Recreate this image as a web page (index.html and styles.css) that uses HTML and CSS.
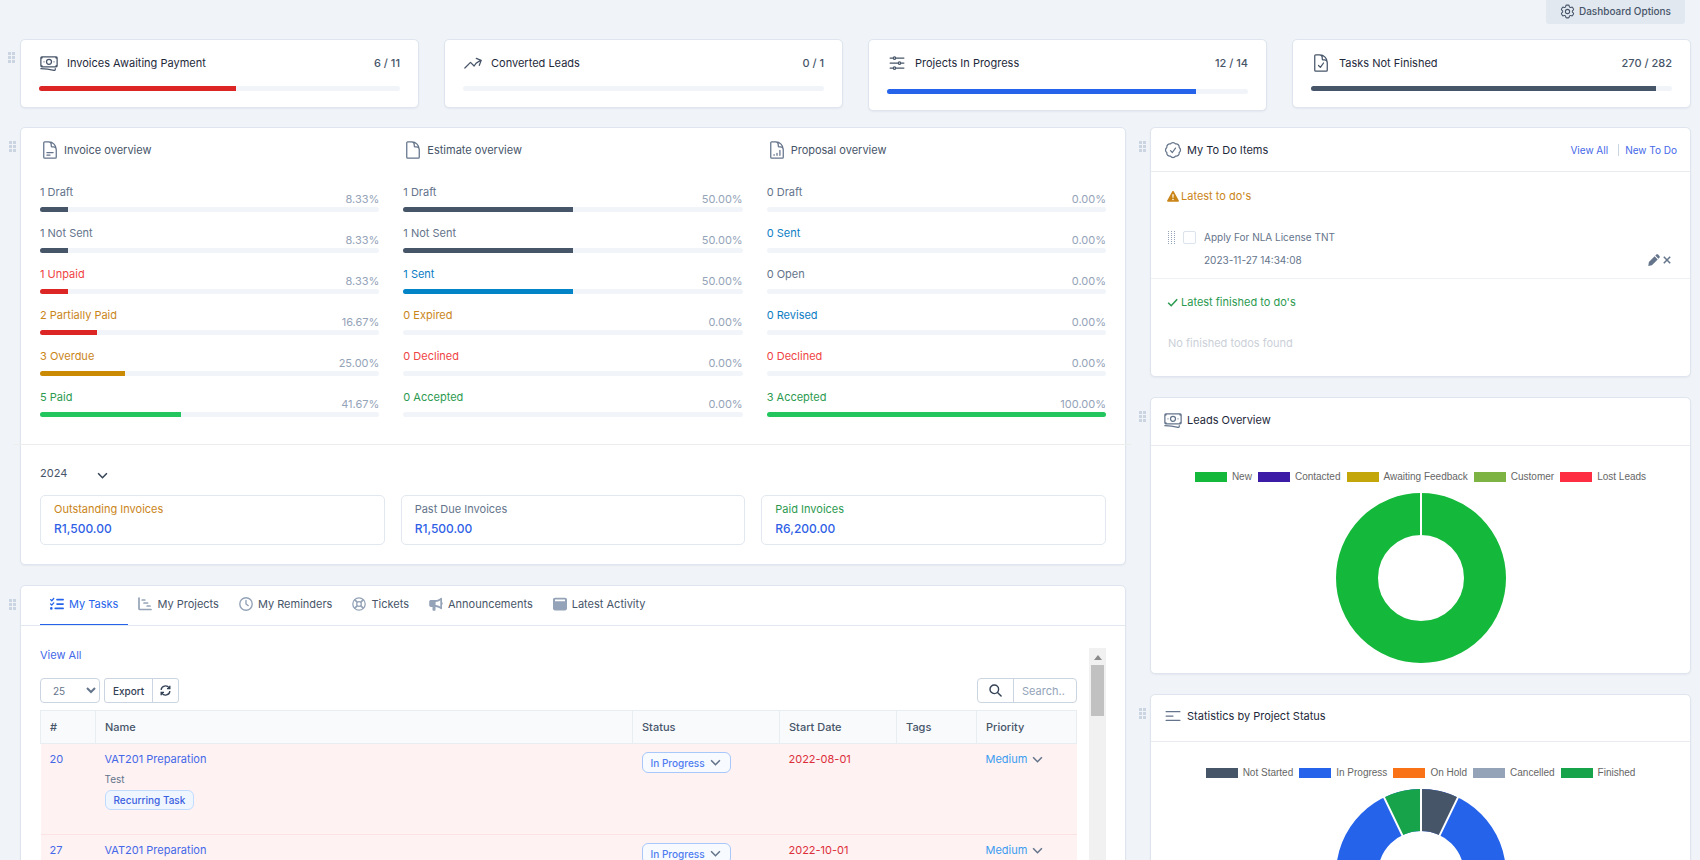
FILE: index.html
```html
<!DOCTYPE html>
<html lang="en">
<head>
<meta charset="utf-8">
<title>Dashboard</title>
<link rel="stylesheet" href="styles.css">
</head>
<body>
<svg class="sprite" aria-hidden="true">
  <symbol id="cog" viewBox="0 0 24 24"><path d="M9.594 3.94c.09-.542.56-.94 1.11-.94h2.593c.55 0 1.02.398 1.11.94l.213 1.281c.063.374.313.686.645.87.074.04.147.083.22.127.324.196.72.257 1.075.124l1.217-.456a1.125 1.125 0 011.37.49l1.296 2.247a1.125 1.125 0 01-.26 1.431l-1.003.827c-.293.24-.438.613-.431.992a6.759 6.759 0 010 .255c-.007.378.138.75.43.99l1.005.828c.424.35.534.954.26 1.43l-1.298 2.247a1.125 1.125 0 01-1.369.491l-1.217-.456c-.355-.133-.75-.072-1.076.124a6.57 6.57 0 01-.22.128c-.331.183-.581.495-.644.869l-.213 1.28c-.09.543-.56.941-1.11.941h-2.594c-.55 0-1.02-.398-1.11-.94l-.213-1.281c-.062-.374-.312-.686-.644-.87a6.52 6.52 0 01-.22-.127c-.325-.196-.72-.257-1.076-.124l-1.217.456a1.125 1.125 0 01-1.369-.49l-1.297-2.247a1.125 1.125 0 01.26-1.431l1.004-.827c.292-.24.437-.613.43-.992a6.932 6.932 0 010-.255c.007-.378-.138-.75-.43-.99l-1.004-.828a1.125 1.125 0 01-.26-1.43l1.297-2.247a1.125 1.125 0 011.37-.491l1.216.456c.356.133.751.072 1.076-.124.072-.044.146-.087.22-.128.332-.183.582-.495.644-.869l.214-1.281z"/><path d="M15 12a3 3 0 11-6 0 3 3 0 016 0z"/></symbol>
  <symbol id="cash" viewBox="0 0 24 24"><path d="M2.25 18.75a60.07 60.07 0 0115.797 2.101c.727.198 1.453-.342 1.453-1.096V18.75M3.75 4.5v.75A.75.75 0 013 6h-.75m0 0v-.375c0-.621.504-1.125 1.125-1.125H20.25M2.25 6v9m18-10.5v.75c0 .414.336.75.75.75h.75m-1.5-1.5h.375c.621 0 1.125.504 1.125 1.125v9.75c0 .621-.504 1.125-1.125 1.125h-.375m1.5-1.5H21a.75.75 0 00-.75.75v.75m0 0H3.75m0 0h-.375a1.125 1.125 0 01-1.125-1.125V15m1.5 1.5v-.75A.75.75 0 003 15h-.75M15 10.5a3 3 0 11-6 0 3 3 0 016 0zm3 0h.008v.008H18V10.5zm-12 0h.008v.008H6V10.5z"/></symbol>
  <symbol id="trend" viewBox="0 0 24 24"><path d="M2.25 18L9 11.25l4.306 4.307a11.95 11.95 0 015.814-5.519l2.74-1.22m0 0l-5.94-2.28m5.94 2.28l-2.28 5.941"/></symbol>
  <symbol id="sliders" viewBox="0 0 24 24"><path d="M10.5 6h9.75M10.5 6a1.5 1.5 0 11-3 0m3 0a1.5 1.5 0 10-3 0M3.75 6H7.5m3 12h9.75m-9.75 0a1.5 1.5 0 01-3 0m3 0a1.5 1.5 0 00-3 0m-3.75 0H7.5m9-6h3.75m-3.75 0a1.5 1.5 0 01-3 0m3 0a1.5 1.5 0 00-3 0m-9.75 0h9.75"/></symbol>
  <symbol id="doc" viewBox="0 0 24 24"><path d="M19.5 14.25v-2.625a3.375 3.375 0 00-3.375-3.375h-1.5A1.125 1.125 0 0113.5 7.125v-1.5a3.375 3.375 0 00-3.375-3.375H8.25m2.25 0H5.625c-.621 0-1.125.504-1.125 1.125v17.25c0 .621.504 1.125 1.125 1.125h12.75c.621 0 1.125-.504 1.125-1.125V11.25a9 9 0 00-9-9z"/></symbol>
  <symbol id="badge" viewBox="0 0 24 24"><path d="M9 12.75L11.25 15 15 9.75M21 12c0 1.268-.63 2.39-1.593 3.068a3.745 3.745 0 01-1.043 3.296 3.745 3.745 0 01-3.296 1.043A3.745 3.745 0 0112 21c-1.268 0-2.39-.63-3.068-1.593a3.746 3.746 0 01-3.296-1.043 3.745 3.745 0 01-1.043-3.296A3.745 3.745 0 013 12c0-1.268.63-2.39 1.593-3.068a3.745 3.745 0 011.043-3.296 3.746 3.746 0 013.296-1.043A3.746 3.746 0 0112 3c1.268 0 2.39.63 3.068 1.593a3.746 3.746 0 013.296 1.043 3.746 3.746 0 011.043 3.296A3.745 3.745 0 0121 12z"/></symbol>
  <symbol id="bars" viewBox="0 0 24 24"><path d="M3.75 6.75h16.5M3.75 12H12m-8.25 5.25h16.5"/></symbol>
  <symbol id="chev" viewBox="0 0 10 6"><path d="M1 1l4 4 4-4" fill="none" stroke="currentColor" stroke-width="1.4"/></symbol>
  <symbol id="grip" viewBox="0 0 7 11"><path fill="currentColor" d="M0 0h3v3H0zM4 0h3v3H4zM0 4h3v3H0zM4 4h3v3H4zM0 8h3v3H0zM4 8h3v3H4z"/></symbol>
</svg>
<div class="page">
  <header class="topbar"><button type="button" class="options"><svg class="ico ico-s"><use href="#cog"/></svg>Dashboard Options</button></header>

  <section class="widget">
    <svg class="grip"><use href="#grip"/></svg>
    <div class="cards">
      <article class="card"><div class="card-head"><svg class="ico"><use href="#cash"/></svg><h2>Invoices Awaiting Payment</h2><b>6 / 11</b></div><div class="bar"><i class="red" style="width:54.5%"></i></div></article>
      <article class="card"><div class="card-head"><svg class="ico"><use href="#trend"/></svg><h2>Converted Leads</h2><b>0 / 1</b></div><div class="bar"></div></article>
      <article class="card"><div class="card-head tall"><svg class="ico"><use href="#sliders"/></svg><h2>Projects In Progress</h2><b>12 / 14</b></div><div class="bar"><i class="blue" style="width:85.7%"></i></div></article>
      <article class="card"><div class="card-head"><svg class="ico" viewBox="0 0 24 24"><use href="#doc"/><path d="M9 15l2.25 2.25L15 12"/></svg><h2>Tasks Not Finished</h2><b>270 / 282</b></div><div class="bar"><i class="slate" style="width:95.7%"></i></div></article>
    </div>
  </section>

  <div class="columns">
    <main class="col">
      <section class="widget">
        <svg class="grip"><use href="#grip"/></svg>
        <div class="panel finance">
          <div class="overviews">
            <div>
              <h3><svg class="ico" viewBox="0 0 24 24"><use href="#doc"/><path d="M8.25 15h7.5m-7.5 3H12"/></svg>Invoice overview</h3>
              <div class="stat"><a href="#" class="t-slate">1 Draft</a><span>8.33%</span></div><div class="bar"><i class="slate" style="width:8.33%"></i></div>
              <div class="stat"><a href="#" class="t-slate">1 Not Sent</a><span>8.33%</span></div><div class="bar"><i class="slate" style="width:8.33%"></i></div>
              <div class="stat"><a href="#" class="t-red">1 Unpaid</a><span>8.33%</span></div><div class="bar"><i class="red" style="width:8.33%"></i></div>
              <div class="stat"><a href="#" class="t-amber">2 Partially Paid</a><span>16.67%</span></div><div class="bar"><i class="red" style="width:16.67%"></i></div>
              <div class="stat"><a href="#" class="t-amber">3 Overdue</a><span>25.00%</span></div><div class="bar"><i class="amber" style="width:25%"></i></div>
              <div class="stat"><a href="#" class="t-green">5 Paid</a><span>41.67%</span></div><div class="bar"><i class="green" style="width:41.67%"></i></div>
            </div>
            <div>
              <h3><svg class="ico"><use href="#doc"/></svg>Estimate overview</h3>
              <div class="stat"><a href="#" class="t-slate">1 Draft</a><span>50.00%</span></div><div class="bar"><i class="slate" style="width:50%"></i></div>
              <div class="stat"><a href="#" class="t-slate">1 Not Sent</a><span>50.00%</span></div><div class="bar"><i class="slate" style="width:50%"></i></div>
              <div class="stat"><a href="#" class="t-sky">1 Sent</a><span>50.00%</span></div><div class="bar"><i class="sky" style="width:50%"></i></div>
              <div class="stat"><a href="#" class="t-amber">0 Expired</a><span>0.00%</span></div><div class="bar"></div>
              <div class="stat"><a href="#" class="t-red">0 Declined</a><span>0.00%</span></div><div class="bar"></div>
              <div class="stat"><a href="#" class="t-green">0 Accepted</a><span>0.00%</span></div><div class="bar"></div>
            </div>
            <div>
              <h3><svg class="ico" viewBox="0 0 24 24"><use href="#doc"/><path d="M8.5 17.5v.8M12 16v2.300M15.500 12.500v5.800"/></svg>Proposal overview</h3>
              <div class="stat"><a href="#" class="t-slate">0 Draft</a><span>0.00%</span></div><div class="bar"></div>
              <div class="stat"><a href="#" class="t-sky">0 Sent</a><span>0.00%</span></div><div class="bar"></div>
              <div class="stat"><a href="#" class="t-slate">0 Open</a><span>0.00%</span></div><div class="bar"></div>
              <div class="stat"><a href="#" class="t-sky">0 Revised</a><span>0.00%</span></div><div class="bar"></div>
              <div class="stat"><a href="#" class="t-red">0 Declined</a><span>0.00%</span></div><div class="bar"></div>
              <div class="stat"><a href="#" class="t-green">3 Accepted</a><span>100.00%</span></div><div class="bar"><i class="green" style="width:100%"></i></div>
            </div>
          </div>
          <hr>
          <div class="year"><select aria-label="Year"><option>2024</option></select><svg class="chev"><use href="#chev"/></svg></div>
          <div class="totals">
            <div><span class="t-amber">Outstanding Invoices</span><strong>R1,500.00</strong></div>
            <div><span class="t-slate">Past Due Invoices</span><strong>R1,500.00</strong></div>
            <div><span class="t-green">Paid Invoices</span><strong>R6,200.00</strong></div>
          </div>
        </div>
      </section>

      <section class="widget">
        <svg class="grip"><use href="#grip"/></svg>
        <div class="panel">
          <nav class="tabs">
            <a href="#" class="active"><svg viewBox="0 0 512 512"><path d="M152.100 38.200c9.900 8.900 10.700 24 1.800 33.900l-72 80c-4.400 4.900-10.600 7.800-17.200 7.900s-12.900-2.400-17.600-7L7 113C-2.300 103.600-2.300 88.400 7 79s24.600-9.400 33.900 0l22.100 22.100 55.100-61.200c8.900-9.900 24-10.700 33.900-1.800zm0 160c9.900 8.900 10.700 24 1.800 33.900l-72 80c-4.400 4.900-10.600 7.800-17.200 7.900s-12.900-2.400-17.600-7L7 273c-9.400-9.400-9.400-24.600 0-33.900s24.600-9.400 33.900 0l22.100 22.100 55.100-61.200c8.900-9.900 24-10.700 33.900-1.800zM224 96c0-17.700 14.300-32 32-32H480c17.700 0 32 14.300 32 32s-14.300 32-32 32H256c-17.700 0-32-14.300-32-32zm0 160c0-17.700 14.300-32 32-32H480c17.700 0 32 14.300 32 32s-14.300 32-32 32H256c-17.700 0-32-14.300-32-32zM160 416c0-17.700 14.300-32 32-32H480c17.700 0 32 14.300 32 32s-14.300 32-32 32H192c-17.700 0-32-14.300-32-32zM48 368a48 48 0 1 1 0 96 48 48 0 1 1 0-96z"/></svg>My Tasks</a>
            <a href="#"><svg viewBox="0 0 14 14"><path fill="none" stroke="currentColor" stroke-width="1.700" stroke-linecap="round" stroke-linejoin="round" d="M1 1v10.500q0 1 1 1h11M4.200 3h2.600M6 6h3.600M9.200 9h2.800"/></svg>My Projects</a>
            <a href="#"><svg viewBox="0 0 14 14"><g fill="none" stroke="currentColor" stroke-width="1.400" stroke-linecap="round"><circle cx="7" cy="7" r="6.200"/><path d="M7 3.500V7l2.200 1.600"/></g></svg>My Reminders</a>
            <a href="#"><svg viewBox="0 0 14 14"><g fill="none" stroke="currentColor" stroke-width="1.300"><circle cx="7" cy="7" r="6.200"/><circle cx="7" cy="7" r="2.300"/><path d="M2.600 2.600l2.800 2.800M11.400 2.600L8.600 5.400M2.600 11.400l2.800-2.800M11.400 11.400L8.600 8.600" stroke-width="1.700"/></g></svg>Tickets</a>
            <a href="#"><svg viewBox="0 0 14 14"><path fill-rule="evenodd" d="M12 .8c.6-.3 1 0 1 .6v3.900c1 .4 1 2 0 2.400v3.900c0 .6-.5.900-1 .6C10.300 10.700 8.700 10 6.500 9.900V13c0 .5-.3.800-.8.800H4.300c-.5 0-.8-.3-.8-.8V9.900H2C1 9.900.2 9.200.2 8.200V4.800C.2 3.800 1 3.100 2 3.100h4C8.500 3.100 10.300 2.300 12 .8zM11.300 3.200C10 4.200 8.400 4.800 6.600 4.900v3.200c1.800.1 3.400.7 4.700 1.700z"/></svg>Announcements</a>
            <a href="#"><svg viewBox="0 0 14 14"><path fill-rule="evenodd" d="M2 .8h10c1.100 0 2 .7 2 1.800v9c0 1.100-.9 1.800-2 1.800H2c-1.100 0-2-.7-2-1.800v-9C0 1.500.9.800 2 .8zM2 2.500v1.800h10V2.500z"/></svg>Latest Activity</a>
          </nav>
          <div class="scroll">
            <div class="scroll-body">
              <a href="#" class="viewall">View All</a>
              <div class="tools">
                <select class="length" aria-label="Rows per page"><option>25</option></select>
                <div class="group"><button type="button">Export</button><button type="button" aria-label="Reload"><svg width="11" height="11" viewBox="0 0 12 12" fill="none" stroke="#334155" stroke-width="1.500"><path d="M1.200 5.300A4.800 4.800 0 0110 3.200M10.800 6.700A4.800 4.800 0 012 8.800M10.700.8v3.100H7.600M1.300 11.200V8.100h3.100"/></svg></button></div>
                <label class="search"><span><svg width="13" height="13" viewBox="0 0 13 13" fill="none" stroke="#334155" stroke-width="1.400" stroke-linecap="round"><circle cx="5.300" cy="5.300" r="4.300"/><path d="M8.500 8.500l3.600 3.600"/></svg></span><input type="text" placeholder="Search.." aria-label="Search tasks"></label>
              </div>
              <table>
                <colgroup><col class="c1"><col><col class="c3"><col class="c4"><col class="c5"><col class="c6"></colgroup>
                <thead><tr><th>#</th><th>Name</th><th>Status</th><th>Start Date</th><th>Tags</th><th>Priority</th></tr></thead>
                <tbody>
                  <tr><td><a href="#">20</a></td><td><a href="#">VAT201 Preparation</a><small>Test</small><em>Recurring Task</em></td><td><button type="button" class="pill">In Progress<svg class="chev"><use href="#chev"/></svg></button></td><td class="date">2022-08-01</td><td></td><td><button type="button" class="prio">Medium<svg class="chev"><use href="#chev"/></svg></button></td></tr>
                  <tr><td><a href="#">27</a></td><td><a href="#">VAT201 Preparation</a></td><td><button type="button" class="pill">In Progress<svg class="chev"><use href="#chev"/></svg></button></td><td class="date">2022-10-01</td><td></td><td><button type="button" class="prio">Medium<svg class="chev"><use href="#chev"/></svg></button></td></tr>
                </tbody>
              </table>
            </div>
            <div class="track" aria-hidden="true"><svg width="8" height="5" viewBox="0 0 8 5"><path fill="#8b8b8b" d="M0 5l4-5 4 5z"/></svg><div class="thumb"></div></div>
          </div>
        </div>
      </section>
    </main>

    <aside class="col">
      <section class="widget">
        <svg class="grip"><use href="#grip"/></svg>
        <div class="panel">
          <div class="phead"><svg class="ico"><use href="#badge"/></svg><h2>My To Do Items</h2><nav><a href="#">View All</a><a href="#">New To Do</a></nav></div>
          <h4 class="t-amber"><svg width="12" height="11" viewBox="0 0 12 11"><path fill="currentColor" fill-rule="evenodd" d="M5.200.5c.4-.6 1.200-.6 1.600 0l5 8.900c.4.700 0 1.400-.8 1.400H1c-.8 0-1.200-.7-.8-1.400zM5.300 3.300l.2 3.500h1l.2-3.500zM6 7.700a.8.800 0 100 1.600.8.800 0 000-1.600z"/></svg>Latest to do's</h4>
          <div class="todo">
            <svg class="dots" width="7" height="13" viewBox="0 0 7 13"><path stroke="#94a3b8" stroke-dasharray="1 1" d="M.5 0v13M3.500 0v13M6.500 0v13"/></svg>
            <input type="checkbox" id="todo1">
            <label for="todo1">Apply For NLA License TNT</label>
            <time>2023-11-27 14:34:08</time>
            <div class="acts">
              <button type="button" aria-label="Edit"><svg width="12" height="12" viewBox="0 0 12 12"><path fill="currentColor" d="M8.300.6c.6-.6 1.200-.6 1.800 0l1.300 1.300c.6.600.6 1.200 0 1.800l-1 1L7.300 1.600zM6.600 2.300l3.100 3.100-5.800 5.800L.3 12l.6-3.900z"/></svg></button>
              <button type="button" aria-label="Remove"><svg width="8" height="8" viewBox="0 0 8 8"><path stroke="currentColor" stroke-width="1.500" d="M.8.800l6.400 6.400M7.200.8L.8 7.200"/></svg></button>
            </div>
          </div>
          <h4 class="t-green done"><svg width="12" height="11" viewBox="0 0 12 11"><path fill="none" stroke="currentColor" stroke-width="1.600" d="M1.200 5.700l3 3 6-6.400"/></svg>Latest finished to do's</h4>
          <p class="empty">No finished todos found</p>
        </div>
      </section>

      <section class="widget">
        <svg class="grip"><use href="#grip"/></svg>
        <div class="panel">
          <div class="phead lead"><svg class="ico"><use href="#cash"/></svg><h2>Leads Overview</h2></div>
          <ul class="legend"><li><i class="l1"></i>New</li><li><i class="l2"></i>Contacted</li><li><i class="l3"></i>Awaiting Feedback</li><li><i class="l4"></i>Customer</li><li><i class="l5"></i>Lost Leads</li></ul>
          <svg class="donut" viewBox="0 0 170 170"><circle cx="85" cy="85" r="64" fill="none" stroke="#14b83a" stroke-width="42"/><path stroke="#fff" stroke-width="2" d="M85 85V0"/></svg>
        </div>
      </section>

      <section class="widget">
        <svg class="grip"><use href="#grip"/></svg>
        <div class="panel">
          <div class="phead stats"><svg class="ico"><use href="#bars"/></svg><h2>Statistics by Project Status</h2></div>
          <ul class="legend"><li><i class="slate"></i>Not Started</li><li><i class="blue"></i>In Progress</li><li><i class="orange"></i>On Hold</li><li><i class="gray"></i>Cancelled</li><li><i class="leaf"></i>Finished</li></ul>
          <svg class="donut" viewBox="0 0 170 170"><g fill="none" stroke-width="42" transform="rotate(-90 85 85)"><circle cx="85" cy="85" r="64" stroke="#2563eb"/><circle cx="85" cy="85" r="64" stroke="#475569" pathLength="14" stroke-dasharray="1 13"/><circle cx="85" cy="85" r="64" stroke="#16a34a" pathLength="14" stroke-dasharray="1 13" stroke-dashoffset="-13"/></g><path stroke="#fff" stroke-width="2" d="M85 85V0M85 85L122.300 7.600M85 85L47.700 7.600"/></svg>
        </div>
      </section>
    </aside>
  </div>
</div>
</body>
</html>
```

FILE: styles.css
```css
* { box-sizing: border-box; }
body { margin: 0; background: #f0f4f9; color: #64748b; font: 11px/16px Inter, sans-serif; }
h2, h3, h4, p, ul { margin: 0; padding: 0; font-size: 11px; font-weight: 400; }
a { color: #4468e8; text-decoration: none; }
button, select, input { font: inherit; color: inherit; margin: 0; }
button { padding: 0; border: 0; background: none; cursor: pointer; }
svg { flex: none; display: block; }
.sprite { width: 0; height: 0; position: absolute; }
.page { height: 100vh; overflow: hidden; padding: 0 9px 0 8px; }
.ico { width: 20px; height: 20px; fill: none; stroke: #475569; stroke-width: 1.5; stroke-linecap: round; stroke-linejoin: round; }
.ico-s { width: 17px; height: 17px; }
.chev { width: 11px; height: 7px; color: #64748b; }

.topbar { display: flex; justify-content: flex-end; padding-right: 6px; }
.options { display: flex; align-items: center; gap: 3px; height: 24px; padding: 0 14px 2px 13px; background: #e2e8f0; border-radius: 0 0 3px 3px; color: #475569; font-size: 10px; font-weight: 500; }

.widget { display: grid; grid-template-columns: 12px minmax(0, 1fr); }
.grip { width: 7px; height: 11px; margin: 14px 0 0 1px; color: #cbd5e1; }
.cards { display: grid; grid-template-columns: repeat(4, 1fr); gap: 25px; align-items: start; }
.topbar + .widget { margin-top: 15px; }
.topbar + .widget .grip { margin: 13px 0 0; }
.card, .panel { background: #fff; border: 1px solid #dfe5ef; border-radius: 5px; box-shadow: 0 1px 2px rgba(15, 23, 42, .05); }
.card { padding: 13px 18px 16px; }
.card-head { display: flex; align-items: center; gap: 8px; margin-bottom: 13px; color: #1e293b; }
.card-head.tall { padding-bottom: 3px; }
.card-head b { margin-left: auto; font-weight: 500; color: #475569; }
.bar { height: 5px; border-radius: 3px; overflow: hidden; background: #f1f5f9; }
.bar i { display: block; height: 100%; }

.red { background: #dc2626; }
.blue { background: #2563eb; }
.slate { background: #475569; }
.amber { background: #ca8a04; }
.green { background: #22c55e; }
.sky { background: #0284c7; }
.orange { background: #f97316; }
.gray { background: #94a3b8; }
.leaf { background: #16a34a; }
.t-slate { color: #64748b; }
.t-red { color: #ef4444; }
.t-amber { color: #ca8519; }
.t-green { color: #2b9a50; }
.t-sky { color: #0b7dc4; }

.columns { display: grid; grid-template-columns: minmax(0, 1118fr) minmax(0, 553fr); gap: 12px; margin-top: 16px; }
.col { display: flex; flex-direction: column; gap: 20px; }
.finance { padding: 12px 19px 19px; }
.overviews { display: grid; grid-template-columns: repeat(3, 1fr); gap: 24px; }
.overviews h3 { display: flex; align-items: center; gap: 4px; margin-bottom: 11px; color: #475569; }
.overviews .ico { stroke: #64748b; }
.stat { display: flex; justify-content: space-between; height: 36px; padding-top: 13px; }
.stat span { margin-top: 7px; color: #94a3b8; }
hr { border: 0; border-top: 1px solid #ededeb; margin: 27px -26px 18px; }
.year { display: flex; align-items: center; }
.year select { appearance: none; width: 57px; height: 20px; padding: 0; border: 0; background: none; color: #475569; }
.year .chev { margin-top: 4px; color: #334155; }
.totals { display: grid; grid-template-columns: repeat(3, 1fr); gap: 16px; margin-top: 12px; }
.totals div { display: grid; gap: 4px; padding: 5px 13px 7px; border: 1px solid #e2e8f0; border-radius: 5px; }
.totals strong { font-size: 12px; font-weight: 500; color: #2f5fe6; }

.tabs { display: flex; height: 40px; padding: 0 19px; border-bottom: 1px solid #e2e8f0; }
.tabs a { display: flex; align-items: center; gap: 5px; padding: 0 10px 2px; border-bottom: 1px solid transparent; color: #475569; }
.tabs svg { width: 14px; height: 14px; fill: currentColor; color: #94a3b8; }
.tabs .active, .tabs .active svg { color: #2563eb; }
.tabs .active { border-color: #2563eb; }
.scroll { display: flex; gap: 12px; padding: 22px 19px 0; }
.scroll-body { flex: 1; min-width: 0; }
.viewall { display: block; line-height: 14px; }
.tools { display: flex; align-items: center; gap: 4px; margin: 16px 0 7px; }
.length { width: 60px; height: 25px; padding-left: 8px; border: 1px solid #cbd5e1; border-radius: 4px; background: #fff; font-size: 10px; }
.group { display: flex; height: 25px; border: 1px solid #cbd5e1; border-radius: 3px; }
.group button { padding: 0 8px; font-size: 10px; font-weight: 500; color: #334155; }
.group button + button { padding: 0 7px; border-left: 1px solid #cbd5e1; }
.search { display: flex; width: 100px; height: 25px; margin-left: auto; border: 1px solid #cbd5e1; border-radius: 4px; }
.search span { display: grid; place-items: center; width: 36px; border-right: 1px solid #cbd5e1; }
.search input { flex: 1; min-width: 0; padding: 0 8px; border: 0; background: none; outline: 0; }
.search input::placeholder { color: #94a3b8; }
table { width: 100%; table-layout: fixed; border-collapse: collapse; }
.c1 { width: 55px; } .c3 { width: 147px; } .c4 { width: 117px; } .c5 { width: 80px; } .c6 { width: 100px; }
th { height: 33px; padding: 0 9px; border: 1px solid #e8edf2; background: #f8fafc; color: #475569; font-weight: 500; text-align: left; }
td { height: 91px; padding: 7px 9px; vertical-align: top; background: #fef2f2; border-bottom: 1px solid #fbe3e4; }
td small { display: block; margin-top: 4px; font-size: 10px; }
td em { display: block; width: max-content; margin-top: 3px; padding: 0 8px; border: 1px solid #bfdbfe; border-radius: 6px; background: #eff6ff; color: #3b5fe0; font: 500 10px/18px Inter, sans-serif; }
.pill { display: flex; align-items: center; gap: 5px; height: 21px; margin-top: 1px; padding: 0 9px 0 8px; border: 1px solid #a8c7fa; border-radius: 6px; background: #f7faff; color: #4f7df0; font-size: 10px; font-weight: 500; }
.prio { display: flex; align-items: center; gap: 5px; color: #3b9cf0; }
.date { color: #dc2f3a; }
.track { width: 17px; padding: 7px 2px 0; background: #f1f1f1; }
.track svg { margin: 0 auto 5px; }
.thumb { height: 51px; background: #c1c1c1; }

.phead { display: flex; align-items: center; gap: 4px; height: 44px; padding: 0 13px 0 12px; border-bottom: 1px solid #e8ecf1; color: #1e293b; }
.phead .ico { stroke: #64748b; }
.phead.lead { height: 48px; padding-bottom: 3px; }
.phead.stats { height: 47px; padding-bottom: 4px; }
.phead nav { display: flex; margin-left: auto; font-size: 10px; line-height: 12px; }
.phead nav a + a { margin-left: 10px; padding-left: 6px; border-left: 1px solid #cbd5e1; }
h4 { display: flex; align-items: center; gap: 2px; padding: 16px 16px 0; }
h4.done { padding-top: 15px; }
.todo { display: grid; grid-template-columns: 7px 13px 1fr auto; column-gap: 8px; row-gap: 7px; align-items: center; padding: 25px 19px 10px 17px; border-bottom: 1px solid #eef2f6; font-size: 10px; }
.todo input { appearance: none; width: 13px; height: 13px; border: 1px solid #dbe3ec; border-radius: 2px; background: #fff; }
.todo label { grid-column: 3 / 5; }
.todo time { grid-column: 3; }
.acts { display: flex; align-items: center; gap: 3px; }
.empty { padding: 25px 17px; color: #cbd0d8; }
.legend { display: flex; justify-content: center; gap: 6px; margin: 25px 0 10px; list-style: none; color: #666; font: 10px/12px "Liberation Sans", sans-serif; }
.legend li { display: flex; align-items: center; gap: 5px; }
.legend i { width: 32px; height: 10px; }
.l1 { background: #14b83a; } .l2 { background: #3c1ba6; } .l3 { background: #c2a60a; } .l4 { background: #7cb342; } .l5 { background: #ff2d42; }
.donut { width: 170px; height: 170px; margin: 0 auto 10px; }
```
